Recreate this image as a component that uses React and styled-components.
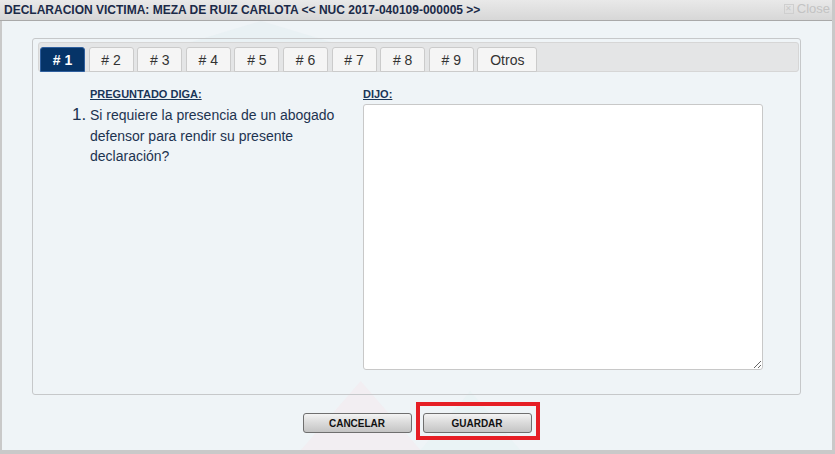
import React, { useState } from "react";
import styled, { createGlobalStyle } from "styled-components";

const Global = createGlobalStyle`
  html, body { margin: 0; padding: 0; background: #eef3f6; }
  body { font-family: "Liberation Sans", Arial, sans-serif; }
  * { box-sizing: border-box; }
`;

const Dialog = styled.div`
  width: 835px;
  height: 454px;
  display: flex;
  flex-direction: column;
  border-right: 3px solid #c9c9c9;
  border-bottom: 4px solid #c9c9c9;
  background: #eff4f7;
  overflow: hidden;
`;

const Header = styled.div`
  height: 21px;
  flex: none;
  display: flex;
  align-items: center;
  justify-content: space-between;
  padding: 0 2px 1px 4px;
  background: linear-gradient(#e9e9e9, #d7d7d7);
  border-bottom: 1px solid #a9a9a9;
`;

const Title = styled.div`
  font: bold 12px "Liberation Sans", Arial, sans-serif;
  color: #1b2a48;
`;

const Close = styled.div`
  display: flex;
  align-items: center;
  gap: 3px;
  color: #c3c3c3;
  font: 13px "Liberation Sans", Arial, sans-serif;
  margin-top: -2px;
`;

const CloseBox = styled.span`
  width: 10px;
  height: 10px;
  border: 1px solid #cfcfcf;
  display: inline-flex;
  align-items: center;
  justify-content: center;
  font-size: 8px;
  line-height: 1;
  color: #c9c9c9;
`;

const Body = styled.div`
  flex: 1;
  display: flex;
  flex-direction: column;
  border-left: 2px solid #c9c9c9;
  padding: 17px 0 0 30px;
  position: relative;
`;

const Watermark = styled.svg`
  position: absolute;
  left: 0;
  top: 0;
  width: 100%;
  height: 100%;
  pointer-events: none;
`;

const Panel = styled.div`
  position: relative;
  width: 769px;
  height: 357px;
  border: 1px solid #c6c8ca;
  border-radius: 3px;
  padding: 3px 1px 0 5px;
  display: flex;
  flex-direction: column;
`;

const TabStrip = styled.div`
  height: 30px;
  background: #e4e5e6;
  border: 1px solid #d6d6d6;
  border-radius: 3px;
  display: flex;
  align-items: flex-end;
  gap: 3.6px;
  padding: 0 0 0 1px;
`;

const Tab = styled.button`
  height: 25px;
  width: ${(p) => (p.$wide ? "60px" : "45px")};
  margin-bottom: -1px;
  border: 1px solid ${(p) => (p.$active ? "#2f5f9e" : "#cbcbcb")};
  border-radius: 3px 3px 0 0;
  background: ${(p) => (p.$active ? "#063468" : "#f5f5f5")};
  color: ${(p) => (p.$active ? "#ffffff" : "#333333")};
  font: 14px "Liberation Sans", Arial, sans-serif;
  font-weight: ${(p) => (p.$active ? "bold" : "normal")};
  padding: 0;
  cursor: pointer;
`;

const Content = styled.div`
  display: grid;
  grid-template-columns: 291px 400px;
  padding: 16px 0 0 34px;
`;

const Label = styled.div`
  font: bold 11px "Liberation Sans", Arial, sans-serif;
  color: #1a3557;
  text-decoration: underline;
  height: 16px;
`;

const QuestionCol = styled.div`
  display: flex;
  flex-direction: column;
  padding-left: 18px;
`;

const Question = styled.div`
  display: flex;
  margin-left: -18px;
  margin-top: 1px;
`;

const Num = styled.span`
  width: 18px;
  flex: none;
  font: 17px "Liberation Sans", Arial, sans-serif;
  color: #1d3350;
  line-height: 20px;
`;

const QText = styled.div`
  font: 14px "Liberation Sans", Arial, sans-serif;
  color: #1d3350;
  line-height: 20.5px;
  width: 262px;
`;

const AnswerCol = styled.div`
  display: flex;
  flex-direction: column;
`;

const Answer = styled.textarea`
  width: 400px;
  height: 266px;
  border: 1px solid #c8c8c8;
  border-radius: 3px;
  background: #fff;
  resize: both;
  font: 13px "Liberation Sans", Arial, sans-serif;
  padding: 4px;
  outline: none;
`;

const Footer = styled.div`
  display: flex;
  justify-content: center;
  gap: 11px;
  padding: 18px 30px 0 0;
  position: relative;
`;

const Button = styled.button`
  width: 109px;
  height: 20px;
  border: 1px solid #6f6f6f;
  border-radius: 3px;
  background: linear-gradient(#f4f4f4 0%, #dcdcdc 45%, #c4c4c4 100%);
  font: bold 10px "Liberation Sans", Arial, sans-serif;
  color: #111;
  padding: 0;
  position: relative;
  cursor: pointer;
  ${(p) =>
    p.$highlight &&
    `
    &::after {
      content: "";
      position: absolute;
      left: -8px;
      right: -9px;
      top: -12px;
      bottom: -8px;
      border: 4px solid #e61e25;
      pointer-events: none;
    }
  `}
`;

const tabs = ["# 1", "# 2", "# 3", "# 4", "# 5", "# 6", "# 7", "# 8", "# 9", "Otros"];

export default function App() {
  const [active, setActive] = useState(0);
  return (
    <>
      <Global />
      <Dialog>
        <Header>
          <Title>DECLARACION VICTIMA: MEZA DE RUIZ CARLOTA &lt;&lt; NUC 2017-040109-000005 &gt;&gt;</Title>
          <Close>
            <CloseBox>✕</CloseBox>
            <span>Close</span>
          </Close>
        </Header>
        <Body>
          <Watermark viewBox="0 0 833 429" preserveAspectRatio="none">
            <polygon points="300,429 360,360 420,429" fill="#f3e9ef" opacity="0.6" />
            <polygon points="420,429 470,370 520,429" fill="#e6f1f4" opacity="0.6" />
            <polygon points="190,21 260,0 330,21" fill="#e4edf2" opacity="0.5" />
          </Watermark>
          <Panel>
            <TabStrip>
              {tabs.map((t, i) => (
                <Tab key={t} $active={i === active} $wide={t === "Otros"} onClick={() => setActive(i)}>
                  {t}
                </Tab>
              ))}
            </TabStrip>
            <Content>
              <QuestionCol>
                <Label>PREGUNTADO DIGA:</Label>
                <Question>
                  <Num>1.</Num>
                  <QText>Si requiere la presencia de un abogado defensor para rendir su presente declaración?</QText>
                </Question>
              </QuestionCol>
              <AnswerCol>
                <Label>DIJO:</Label>
                <Answer />
              </AnswerCol>
            </Content>
          </Panel>
          <Footer>
            <Button>CANCELAR</Button>
            <Button $highlight>GUARDAR</Button>
          </Footer>
        </Body>
      </Dialog>
    </>
  );
}
